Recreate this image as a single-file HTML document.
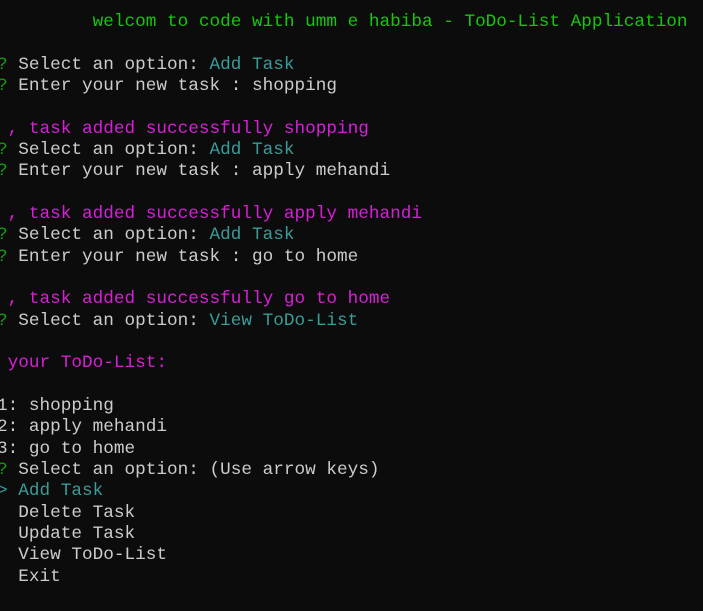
<!DOCTYPE html>
<html><head><meta charset="utf-8"><style>
html,body{margin:0;padding:0;background:#0c0c0c;width:703px;height:611px;overflow:hidden}
pre{margin:0;position:absolute;left:-3px;top:12px;font-family:"Liberation Mono",monospace;font-size:17.72px;line-height:21.33px;color:#cccccc;white-space:pre}
.g{color:#16c60c}.q{color:#13a10e}.c{color:#3a9b98}.m{color:#d620d6}
</style></head><body>
<pre><span class="g">         welcom to code with umm e habiba - ToDo-List Application</span>

<span class="q">?</span> Select an option: <span class="c">Add Task</span>
<span class="q">?</span> Enter your new task : shopping

<span class="m"> , task added successfully shopping</span>
<span class="q">?</span> Select an option: <span class="c">Add Task</span>
<span class="q">?</span> Enter your new task : apply mehandi

<span class="m"> , task added successfully apply mehandi</span>
<span class="q">?</span> Select an option: <span class="c">Add Task</span>
<span class="q">?</span> Enter your new task : go to home

<span class="m"> , task added successfully go to home</span>
<span class="q">?</span> Select an option: <span class="c">View ToDo-List</span>

<span class="m"> your ToDo-List:</span>

1: shopping
2: apply mehandi
3: go to home
<span class="q">?</span> Select an option: (Use arrow keys)
<span class="c">&gt; Add Task</span>
  Delete Task
  Update Task
  View ToDo-List
  Exit</pre>
</body></html>
